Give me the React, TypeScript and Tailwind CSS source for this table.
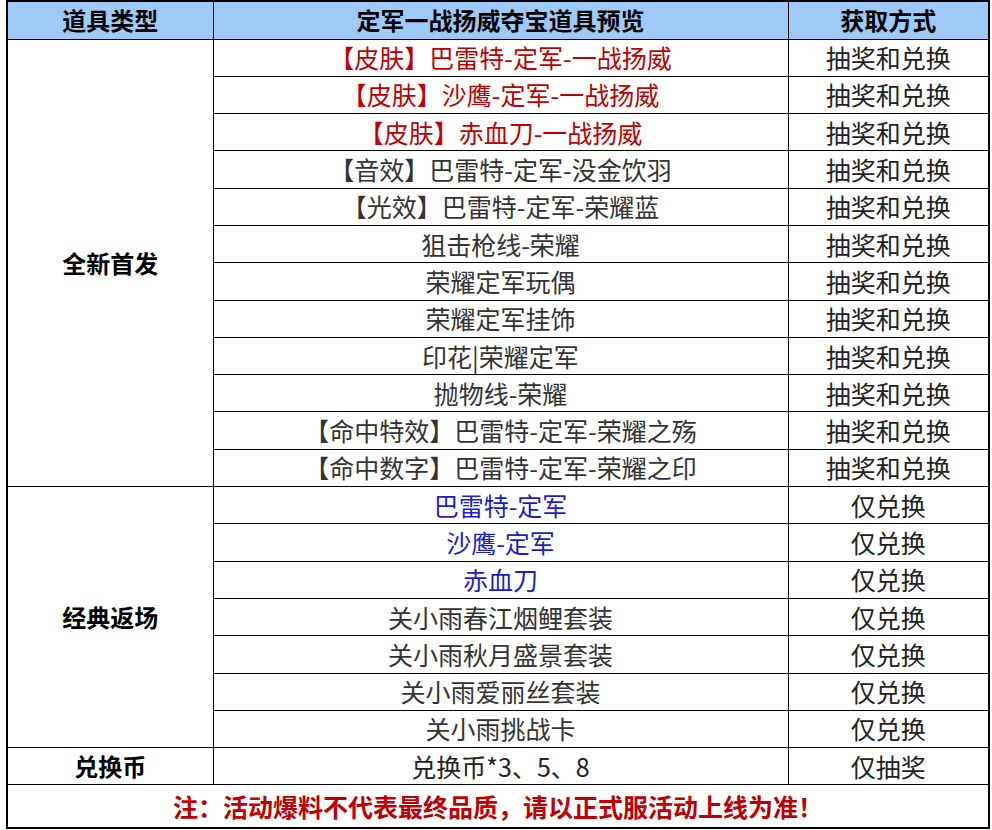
import React from "react";

type Item = { name: string; way: string; color?: "red" | "blue" };

const newItems: Item[] = [
  { name: "【皮肤】巴雷特-定军-一战扬威", way: "抽奖和兑换", color: "red" },
  { name: "【皮肤】沙鹰-定军-一战扬威", way: "抽奖和兑换", color: "red" },
  { name: "【皮肤】赤血刀-一战扬威", way: "抽奖和兑换", color: "red" },
  { name: "【音效】巴雷特-定军-没金饮羽", way: "抽奖和兑换" },
  { name: "【光效】巴雷特-定军-荣耀蓝", way: "抽奖和兑换" },
  { name: "狙击枪线-荣耀", way: "抽奖和兑换" },
  { name: "荣耀定军玩偶", way: "抽奖和兑换" },
  { name: "荣耀定军挂饰", way: "抽奖和兑换" },
  { name: "印花|荣耀定军", way: "抽奖和兑换" },
  { name: "抛物线-荣耀", way: "抽奖和兑换" },
  { name: "【命中特效】巴雷特-定军-荣耀之殇", way: "抽奖和兑换" },
  { name: "【命中数字】巴雷特-定军-荣耀之印", way: "抽奖和兑换" },
];

const classicItems: Item[] = [
  { name: "巴雷特-定军", way: "仅兑换", color: "blue" },
  { name: "沙鹰-定军", way: "仅兑换", color: "blue" },
  { name: "赤血刀", way: "仅兑换", color: "blue" },
  { name: "关小雨春江烟鲤套装", way: "仅兑换" },
  { name: "关小雨秋月盛景套装", way: "仅兑换" },
  { name: "关小雨爱丽丝套装", way: "仅兑换" },
  { name: "关小雨挑战卡", way: "仅兑换" },
];

const cell = "border border-black p-0 text-center align-middle leading-none";

const nameColor = (c?: string) =>
  c === "red" ? "text-[#c00000]" : c === "blue" ? "text-[#1c1cd6]" : "text-[#333333]";

function Group({ title, items }: { title: string; items: Item[] }) {
  return (
    <>
      {items.map((it, i) => (
        <tr key={it.name} className="h-[37.3px]">
          {i === 0 && (
            <td rowSpan={items.length} className={`${cell} text-[24px] font-bold text-black`}>
              {title}
            </td>
          )}
          <td className={`${cell} ${nameColor(it.color)}`}>{it.name}</td>
          <td className={`${cell} text-[#222222]`}>{it.way}</td>
        </tr>
      ))}
    </>
  );
}

export default function App() {
  return (
    <div className="w-[992px] h-[830px] bg-white pl-[6px] overflow-hidden">
      <table
        className="table-fixed border-collapse border-2 border-black text-[25px]"
        style={{ fontFamily: '"Noto Sans CJK SC", "Noto Sans", sans-serif', width: 982 }}
      >
        <colgroup>
          <col className="w-[206px]" />
          <col className="w-[575px]" />
          <col className="w-[201px]" />
        </colgroup>
        <thead>
          <tr className="h-[38px] bg-[#9fc9f7]">
            <th className={`${cell} text-[24px] font-bold text-black`}>道具类型</th>
            <th className={`${cell} text-[24px] font-bold text-black`}>定军一战扬威夺宝道具预览</th>
            <th className={`${cell} text-[24px] font-bold text-black`}>获取方式</th>
          </tr>
        </thead>
        <tbody>
          <Group title="全新首发" items={newItems} />
          <Group title="经典返场" items={classicItems} />
          <tr className="h-[37.3px]">
            <td className={`${cell} text-[24px] font-bold text-black`}>兑换币</td>
            <td className={`${cell} text-[#222222]`}>兑换币*3、5、8</td>
            <td className={`${cell} text-[#222222]`}>仅抽奖</td>
          </tr>
          <tr className="h-[43px]">
            <td colSpan={3} className={`${cell} font-bold text-[#c00000]`}>
              注：活动爆料不代表最终品质，请以正式服活动上线为准！
            </td>
          </tr>
        </tbody>
      </table>
    </div>
  );
}
